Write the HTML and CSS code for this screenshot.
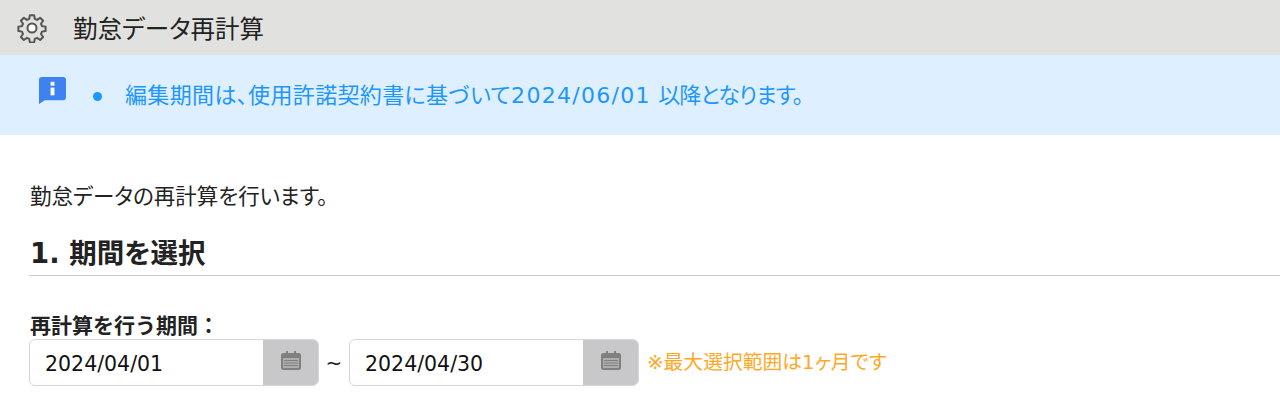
FILE: index.html
```html
<!DOCTYPE html>
<html lang="ja">
<head>
    <meta charset="UTF-8">
    <title>勤怠データ再計算</title>
    <link rel="stylesheet" href="styles.css">
</head>
<body>
    <header class="title-bar">
        <svg class="gear" viewBox="0 0 24 24" width="30" height="30" fill="none" stroke="#555" stroke-width="1.6" stroke-linejoin="round">
            <path d="M10.3 1.8h3.4l.5 2.9 1.9.8 2.4-1.7 2.4 2.4-1.7 2.4.8 1.9 2.9.5v3.4l-2.9.5-.8 1.9 1.7 2.4-2.4 2.4-2.4-1.7-1.9.8-.5 2.9h-3.4l-.5-2.9-1.9-.8-2.4 1.7-2.4-2.4 1.7-2.4-.8-1.9-2.9-.5v-3.4l2.9-.5.8-1.9-1.7-2.4 2.4-2.4 2.4 1.7 1.9-.8z"/>
            <circle cx="12" cy="12" r="3.6" fill="#fff"/>
        </svg>
        <h1>勤怠データ再計算</h1>
    </header>

    <div class="notice">
        <svg class="notice-icon" viewBox="0 0 28 28" width="27" height="27">
            <path fill="#3d82f0" d="M3 0h22a3 3 0 0 1 3 3v18a3 3 0 0 1-3 3H6l-6 4V3a3 3 0 0 1 3-3z"/>
            <rect fill="#fff" x="12" y="5" width="4" height="4"/>
            <rect fill="#fff" x="12" y="11" width="4" height="8"/>
        </svg>
        <ul>
            <li>編集期間は、使用許諾契約書に基づいて<span class="notice-date">2024/06/01</span> <span class="notice-tail">以降となります。</span></li>
        </ul>
    </div>

    <main class="content">
        <p class="lead">勤怠データの再計算を行います。</p>
        <h2>1. 期間を選択</h2>
        <label class="field-label">再計算を行う期間：</label>
        <div class="range">
            <div class="date-input">
                <span class="date-value">2024/04/01</span>
                <span class="date-btn">
                    <svg viewBox="0 0 20 20" width="20" height="20"><use href="#cal"/></svg>
                </span>
            </div>
            <span class="tilde">~</span>
            <div class="date-input">
                <span class="date-value">2024/04/30</span>
                <span class="date-btn">
                    <svg viewBox="0 0 20 20" width="20" height="20"><use href="#cal"/></svg>
                </span>
            </div>
            <span class="range-note">※最大選択範囲は1ヶ月です</span>
        </div>
    </main>

    <svg class="defs" width="0" height="0">
        <symbol id="cal" viewBox="0 0 20 20">
            <rect x="5" y="0" width="2" height="4" fill="#808080"/>
            <rect x="13" y="0" width="2" height="4" fill="#808080"/>
            <rect x="0" y="2" width="20" height="17" rx="2.5" fill="#808080"/>
            <rect x="2" y="7" width="16" height="10" fill="#adadad"/>
            <path d="M3 9.5h14M3 12h14M3 14.5h14" stroke="#808080" stroke-width="1"/>
        </symbol>
    </svg>
</body>
</html>
```

FILE: styles.css
```css
* {
    margin: 0;
    padding: 0;
    box-sizing: border-box;
}

body {
    background: #fff;
    color: #222;
    font-family: 'DejaVu Sans', 'Noto Sans CJK JP', sans-serif;
    font-feature-settings: "palt";
    overflow: hidden;
}

.title-bar {
    display: flex;
    align-items: center;
    gap: 26px;
    height: 55px;
    padding: 5px 0 0 17px;
    background: #e1e1df;
}

.title-bar .gear {
    margin-top: -4px;
}

.title-bar h1 {
    font-size: 24.5px;
    font-weight: 400;
    line-height: 1;
}

.notice {
    display: flex;
    height: 80px;
    padding: 22px 0 0 39px;
    background: #def0ff;
    color: #1e96ff;
}

.notice ul {
    margin-left: 26px;
    list-style: none;
}

.notice li {
    position: relative;
    padding-left: 33px;
    font-size: 22px;
    letter-spacing: 0.35px;
    line-height: 38px;
}

.notice-date {
    letter-spacing: 1.3px;
}

.notice-tail {
    letter-spacing: -0.9px;
}

.notice li::before {
    content: "";
    position: absolute;
    left: 1px;
    top: 15px;
    width: 9px;
    height: 9px;
    border-radius: 50%;
    background: #1e96ff;
}

.content {
    padding: 47px 0 0 29px;
}

.lead {
    margin-left: 1px;
    font-size: 21.5px;
    line-height: 30px;
}

.content h2 {
    margin-top: 21px;
    padding-bottom: 2px;
    padding-left: 1px;
    border-bottom: 1px solid #ccc;
    font-size: 27.5px;
    font-weight: 700;
    line-height: 40px;
}

.field-label {
    display: block;
    margin-top: 38px;
    margin-left: 1px;
    font-size: 21px;
    font-feature-settings: normal;
    font-weight: 700;
    line-height: 25px;
}

.range {
    display: flex;
    align-items: center;
}

.date-input {
    display: flex;
    width: 290px;
    height: 47px;
    border: 1px solid #d6d6d6;
    border-radius: 6px;
    overflow: hidden;
}

.date-value {
    flex: 1;
    padding-left: 15px;
    font-size: 20.5px;
    line-height: 48px;
    color: #111;
}

.date-btn {
    display: flex;
    align-items: center;
    justify-content: center;
    width: 56px;
    margin: -1px;
    padding-bottom: 4px;
    background: #c8c8ca;
}

.tilde {
    width: 30px;
    text-align: center;
    font-size: 20px;
}

.range-note {
    margin: -4px 0 0 8px;
    font-size: 19.8px;
    color: #ffa826;
}

.defs {
    position: absolute;
}
```
